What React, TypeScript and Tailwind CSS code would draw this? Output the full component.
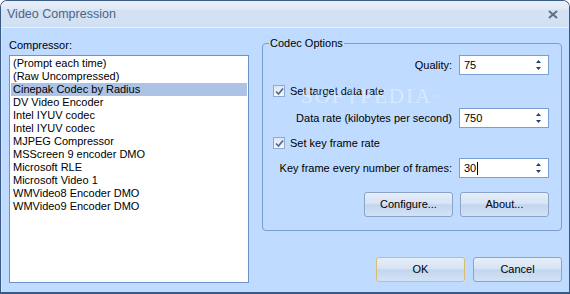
import React from "react"

const codecs = [
  "(Prompt each time)",
  "(Raw Uncompressed)",
  "Cinepak Codec by Radius",
  "DV Video Encoder",
  "Intel IYUV codec",
  "Intel IYUV codec",
  "MJPEG Compressor",
  "MSScreen 9 encoder DMO",
  "Microsoft RLE",
  "Microsoft Video 1",
  "WMVideo8 Encoder DMO",
  "WMVideo9 Encoder DMO",
]

function Spinner() {
  return (
    <svg width="7" height="12" viewBox="0 0 7 12" className="shrink-0">
      <path d="M3.5 1 L6 4 L1 4 Z" fill="#1f3f70" />
      <path d="M3.5 11 L6 8 L1 8 Z" fill="#1f3f70" />
    </svg>
  )
}

function SpinBox({ value, caret }: { value: string; caret?: boolean }) {
  return (
    <div className="flex h-[20px] w-[90px] shrink-0 items-center justify-between border border-[#7b9ed2] bg-white pl-[4px] pr-[6px]">
      <span className="flex items-center text-black">
        {value}
        {caret && <span className="ml-[1px] inline-block h-[13px] w-[1px] bg-black" />}
      </span>
      <Spinner />
    </div>
  )
}

function CheckBox() {
  return (
    <div className="flex h-[12px] w-[12px] shrink-0 items-center justify-center border border-[#8ea9d2] bg-[linear-gradient(to_bottom,#dfe6ef,#f4f6f9)]">
      <svg width="9" height="9" viewBox="0 0 9 9">
        <path d="M1 4.5 L3.5 7 L8 1.5" stroke="#4a6896" strokeWidth="1.6" fill="none" />
      </svg>
    </div>
  )
}

function Button({ label, primary }: { label: string; primary?: boolean }) {
  return (
    <button
      className={
        primary
          ? "h-[25px] w-[89px] rounded-[3px] border border-[#d9bd6e] bg-[linear-gradient(to_bottom,#e6eef9_0%,#d7e4f5_45%,#c3d6ef_52%,#d3e3f6_100%)] text-black"
          : "h-[25px] w-[89px] rounded-[3px] border border-[#8ba3c6] bg-[linear-gradient(to_bottom,#e6eef9_0%,#d7e4f5_45%,#c3d6ef_52%,#d3e3f6_100%)] text-black"
      }
    >
      {label}
    </button>
  )
}

export default function App() {
  return (
    <div className="flex h-[294px] w-[570px] flex-col overflow-hidden rounded-t-[7px] border border-b-2 border-[#3a5a85] font-['Liberation_Sans',Arial,sans-serif] text-[11px] text-black">
      {/* Title bar */}
      <div className="flex h-[27px] shrink-0 items-center justify-between border-b border-[#e6effb] bg-[linear-gradient(to_bottom,#e9f0fa_0%,#e0eaf7_30%,#d4e2f4_35%,#d1e0f3_100%)] pl-[6px] pr-[11px]">
        <span className="text-[12.5px] text-[#52627f]">Video Compression</span>
        <svg width="10" height="9" viewBox="0 0 10 9">
          <path d="M1 1 L9 8 M9 1 L1 8" stroke="#5f6f88" strokeWidth="2" />
        </svg>
      </div>

      {/* Body */}
      <div className="flex flex-1 bg-[#bfdbff] pl-[8px] pr-[7px] shadow-[inset_1px_0_0_#d6e6fb]">
        {/* Compressor list */}
        <div className="flex w-[240px] flex-col pt-[10px]">
          <span className="leading-[14px]">Compressor:</span>
          <div className="mt-[3px] h-[228px] border border-[#6a93cb] bg-white p-[1px]">
            {codecs.map((c, i) => (
              <div
                key={i}
                className={
                  i === 2
                    ? "h-[13px] bg-[#adc3e5] px-[2px] leading-[13px]"
                    : "h-[13px] px-[2px] leading-[13px]"
                }
              >
                {c}
              </div>
            ))}
          </div>
        </div>

        {/* Options */}
        <div className="ml-[13px] flex w-[300px] flex-col pt-[15px]">
          <div className="relative h-[188px] rounded-[4px] border border-[#7b9ed2] pl-[10px] pr-[12px] pt-[11px]">
            <span className="absolute -top-[8px] left-[6px] bg-[#bfdbff] px-[1px] leading-[14px]">Codec Options</span>

            {/* watermark */}
            <span className="pointer-events-none absolute left-[38px] top-[42px] font-['Liberation_Serif',serif] text-[21px] leading-[21px] tracking-[2px] text-white/40">
              SOFTPEDIA<sup className="text-[7px]">™</sup>
            </span>

            <div className="flex h-[20px] items-center justify-end gap-[7px]">
              <span>Quality:</span>
              <SpinBox value="75" />
            </div>

            <div className="mt-[9px] flex h-[14px] items-center gap-[5px]">
              <CheckBox />
              <span>Set target data rate</span>
            </div>

            <div className="mt-[10px] flex h-[20px] items-center justify-end gap-[7px]">
              <span>Data rate (kilobytes per second)</span>
              <SpinBox value="750" />
            </div>

            <div className="mt-[8px] flex h-[14px] items-center gap-[5px]">
              <CheckBox />
              <span>Set key frame rate</span>
            </div>

            <div className="mt-[8px] flex h-[20px] items-center justify-end gap-[7px]">
              <span>Key frame every number of frames:</span>
              <SpinBox value="30" caret />
            </div>

            <div className="mt-[14px] flex justify-end gap-[7px]">
              <Button label="Configure..." />
              <Button label="About..." />
            </div>
          </div>

          <div className="mt-[26px] flex justify-end gap-[8px]">
            <Button label="OK" primary />
            <Button label="Cancel" />
          </div>
        </div>
      </div>
    </div>
  )
}
